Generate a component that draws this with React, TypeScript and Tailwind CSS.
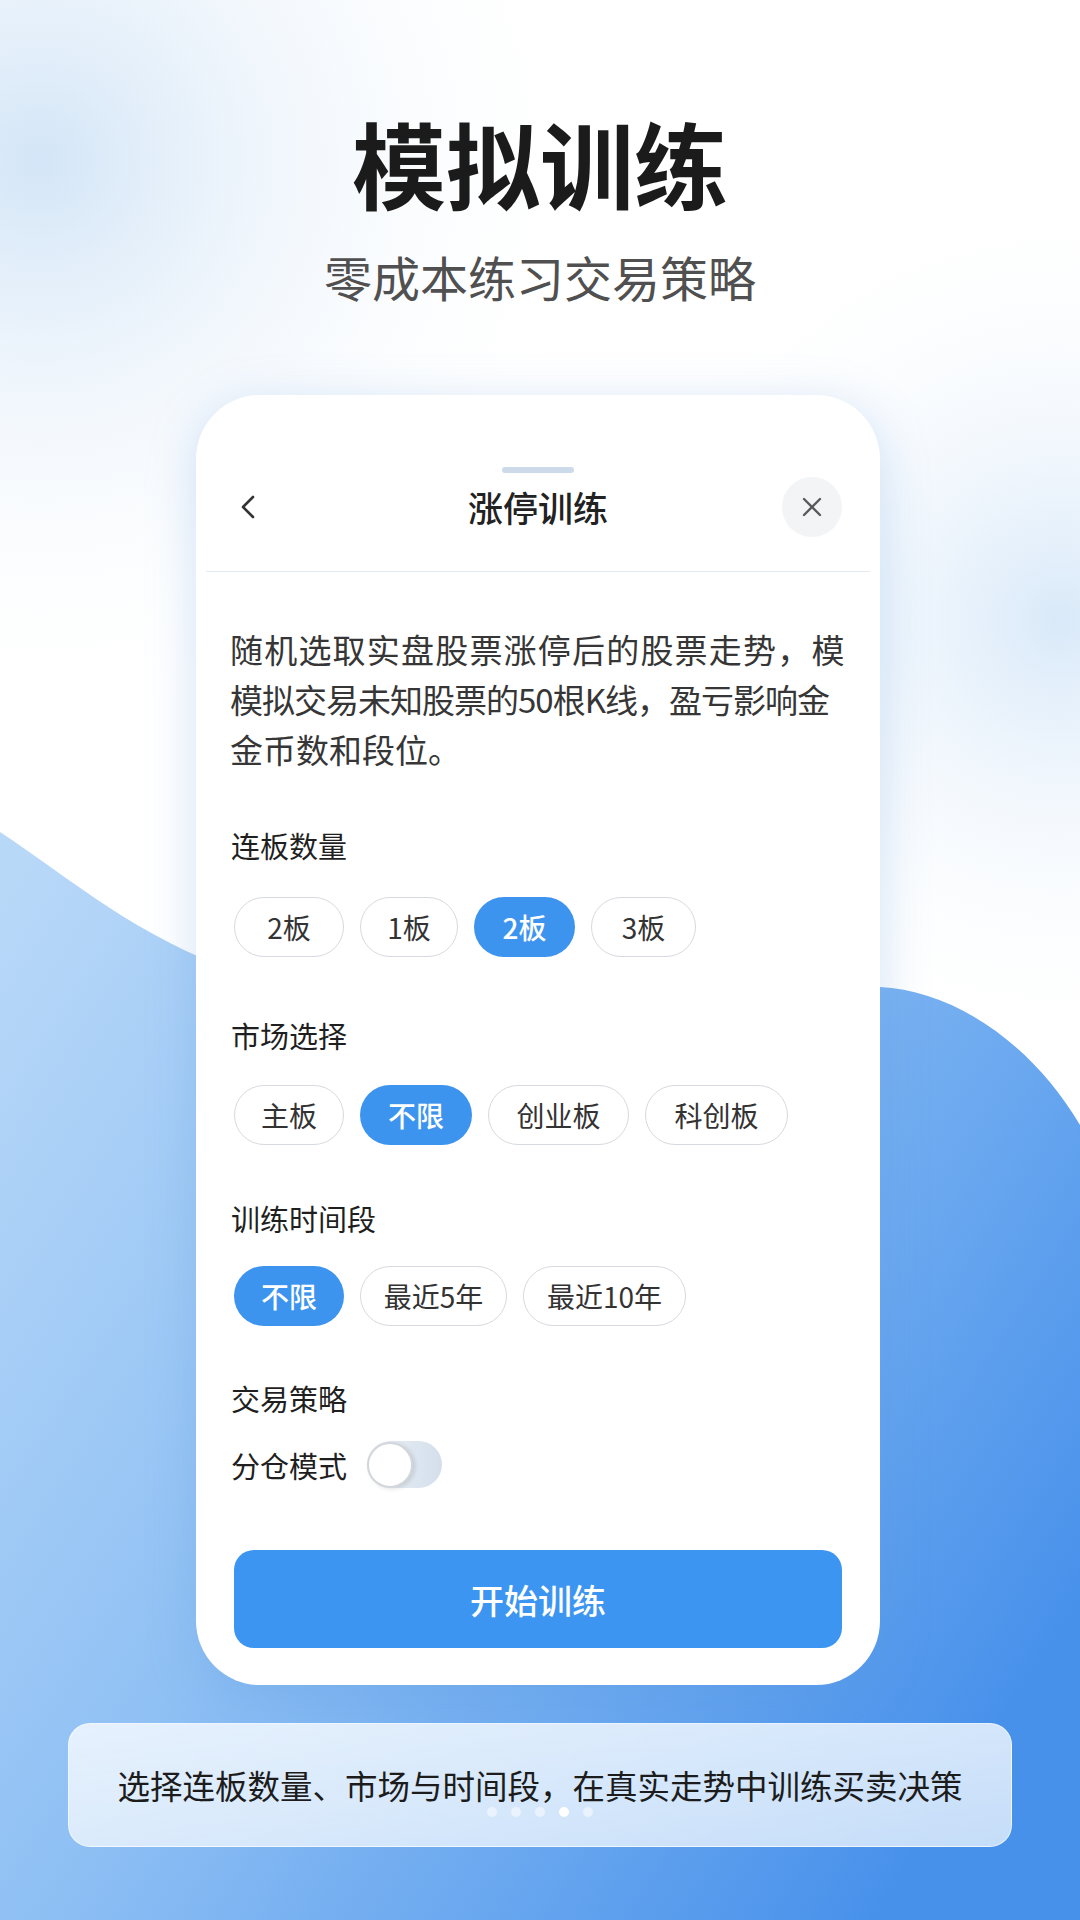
import { X } from 'lucide-react';

type Chip = { label: string; w: string; active?: boolean };

const boardCount: Chip[] = [
  { label: '2板', w: 'w-[110px]' },
  { label: '1板', w: 'w-[98px]' },
  { label: '2板', w: 'w-[101px]', active: true },
  { label: '3板', w: 'w-[105px]' },
];

const markets: Chip[] = [
  { label: '主板', w: 'w-[110px]' },
  { label: '不限', w: 'w-[112px]', active: true },
  { label: '创业板', w: 'w-[141px]' },
  { label: '科创板', w: 'w-[143px]' },
];

const periods: Chip[] = [
  { label: '不限', w: 'w-[110px]', active: true },
  { label: '最近5年', w: 'w-[147px]' },
  { label: '最近10年', w: 'w-[163px]' },
];

function ChipRow({ items }: { items: Chip[] }) {
  return (
    <div className="flex gap-[16px]">
      {items.map((c, i) => (
        <div
          key={i}
          className={
            c.active
              ? `${c.w} h-[60px] rounded-full bg-[#3d94ef] flex items-center justify-center text-[28px] font-medium text-white`
              : `${c.w} h-[60px] rounded-full border-[1.5px] border-[#d6dade] bg-white flex items-center justify-center text-[28px] text-[#333]`
          }
        >
          {c.label}
        </div>
      ))}
    </div>
  );
}

function Background() {
  return (
    <svg className="absolute inset-0" width="1080" height="1920" viewBox="0 0 1080 1920">
      <defs>
        <radialGradient id="hazeTL" cx="40" cy="160" r="560" gradientUnits="userSpaceOnUse">
          <stop offset="0" stopColor="#d3e5f7" />
          <stop offset="1" stopColor="#ffffff" stopOpacity="0" />
        </radialGradient>
        <radialGradient id="hazeR" cx="1060" cy="620" r="440" gradientUnits="userSpaceOnUse">
          <stop offset="0" stopColor="#d9e9f9" />
          <stop offset="1" stopColor="#ffffff" stopOpacity="0" />
        </radialGradient>
        <linearGradient id="wave" x1="0" y1="900" x2="1080" y2="1600" gradientUnits="userSpaceOnUse">
          <stop offset="0" stopColor="#b8d8f8" />
          <stop offset="0.45" stopColor="#8fc0f4" />
          <stop offset="1" stopColor="#4891eb" />
        </linearGradient>
      </defs>
      <rect width="1080" height="1920" fill="#ffffff" />
      <rect width="1080" height="1920" fill="url(#hazeTL)" />
      <rect width="1080" height="1920" fill="url(#hazeR)" />
      <path
        d="M0 832 C 70 878 140 940 240 972 C 400 1010 640 992 880 987 C 950 990 1030 1040 1080 1125 L1080 1920 L0 1920 Z"
        fill="url(#wave)"
      />
    </svg>
  );
}

export default function App() {
  return (
    <div className="relative w-[1080px] h-[1920px] overflow-hidden font-['Noto_Sans_CJK_SC','Noto_Sans',sans-serif]">
      <Background />

      <div className="relative flex flex-col items-center">
        {/* Hero */}
        <h1 className="mt-[115px] text-[94px] leading-none font-bold text-[#1b1b1b]">模拟训练</h1>
        <p className="mt-[43px] text-[48px] leading-none text-[#505050]">零成本练习交易策略</p>

        {/* Phone sheet */}
        <div className="self-start ml-[196px] mt-[95px] w-[684px] rounded-[64px] bg-white shadow-[0_10px_50px_rgba(90,150,220,0.28)] pt-[72px] pb-[37px]">
          <div className="mx-auto w-[72px] h-[6px] rounded-full bg-[#ccdae9]" />

          <div className="mt-[4px] h-[60px] px-[38px] grid grid-cols-[1fr_auto_1fr] items-center">
            <div className="ml-[6px]">
              <svg width="16" height="24" viewBox="0 0 16 24" fill="none">
                <path d="M13 2 L3 12 L13 22" stroke="#333" strokeWidth="2.6" strokeLinecap="round" strokeLinejoin="round" />
              </svg>
            </div>
            <div className="text-[35px] font-medium text-[#222]">涨停训练</div>
            <div className="justify-self-end w-[60px] h-[60px] rounded-full bg-[#f3f4f6] flex items-center justify-center">
              <X size={32} strokeWidth={1.8} color="#5a5a5a" />
            </div>
          </div>

          <div className="mx-[10px] mt-[34px] h-px bg-[#e4e9ef]" />

          <div className="mt-[52px] px-[34px] text-[33px] leading-[50px] text-[#363636] whitespace-nowrap">
            <div className="tracking-[1.2px]">随机选取实盘股票涨停后的股票走势，模</div>
            <div className="tracking-[-1px]">模拟交易未知股票的50根K线，盈亏影响金</div>
            <div>金币数和段位。</div>
          </div>

          <div className="px-[38px]">
            <div className="mt-[51px] -ml-[3px] text-[29px] leading-[40px] text-[#1f1f1f]">连板数量</div>
            <div className="mt-[32px]">
              <ChipRow items={boardCount} />
            </div>

            <div className="mt-[58px] -ml-[3px] text-[29px] leading-[40px] text-[#1f1f1f]">市场选择</div>
            <div className="mt-[30px]">
              <ChipRow items={markets} />
            </div>

            <div className="mt-[53px] -ml-[3px] text-[29px] leading-[40px] text-[#1f1f1f]">训练时间段</div>
            <div className="mt-[28px]">
              <ChipRow items={periods} />
            </div>

            <div className="mt-[52px] -ml-[3px] text-[29px] leading-[40px] text-[#1f1f1f]">交易策略</div>
            <div className="mt-[23px] -ml-[3px] h-[47px] flex items-center gap-[20px]">
              <span className="text-[29px] leading-[40px] text-[#1f1f1f]">分仓模式</span>
              {/* switch, off */}
              <div className="w-[75px] h-[47px] rounded-full bg-gradient-to-r from-[#eef2f6] to-[#d3dfec] flex items-center">
                <div className="w-[46px] h-[46px] rounded-full bg-white border-[2px] border-[#d3d7dc] shadow-[2px_1px_4px_rgba(0,0,0,0.12)]" />
              </div>
            </div>

            <button className="mt-[62px] w-full h-[98px] rounded-[20px] bg-[#3d95f2] text-white text-[34px] font-medium">
              开始训练
            </button>
          </div>
        </div>

        {/* Caption strip */}
        <div className="mt-[38px] w-[944px] h-[124px] rounded-[22px] border border-white/60 bg-gradient-to-br from-[#eaf3fd]/95 to-[#dcebfb]/85 flex flex-col items-center pt-[44px]">
          <div className="text-[32.5px] leading-[34px] text-[#1c1c1c]">选择连板数量、市场与时间段，在真实走势中训练买卖决策</div>
          <div className="mt-[5px] flex gap-[14px]">
            {[0, 1, 2, 3, 4].map((i) => (
              <div key={i} className={i === 3 ? 'w-[10px] h-[10px] rounded-full bg-white' : 'w-[10px] h-[10px] rounded-full bg-white/50'} />
            ))}
          </div>
        </div>
      </div>
    </div>
  );
}
